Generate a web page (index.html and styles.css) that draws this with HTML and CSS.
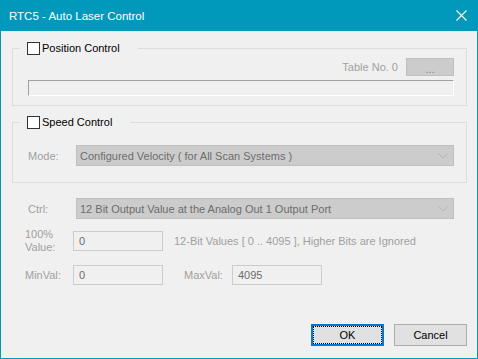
FILE: index.html
```html
<!DOCTYPE html>
<html lang="en">
<head>
  <meta charset="UTF-8">
  <title>RTC5 - Auto Laser Control</title>
  <link rel="stylesheet" href="styles.css">
</head>
<body>

  <div class="window">
    <div class="titlebar">
      <span class="title">RTC5 - Auto Laser Control</span>
      <svg class="close" width="11" height="11" viewBox="0 0 11 11">
        <path d="M0.5 0.5 L10.5 10.5 M10.5 0.5 L0.5 10.5" stroke="#fff" stroke-width="1.1" fill="none"/>
      </svg>
    </div>

    <div class="content">
      <fieldset class="group group-position">
        <legend class="group-title"><span class="check"></span>Position Control</legend>
        <div class="table-row">
          <span class="muted">Table No. 0</span>
          <span class="btn-dots">...</span>
        </div>
        <div class="progress"></div>
      </fieldset>

      <fieldset class="group group-speed">
        <legend class="group-title"><span class="check"></span>Speed Control</legend>
        <div class="combo-row">
          <span class="lbl muted">Mode:</span>
          <div class="combo">
            <span>Configured Velocity ( for All Scan Systems )</span>
            <svg class="chevron" width="10" height="6" viewBox="0 0 10 6"><polyline points="0.5,0.5 5,5 9.5,0.5" fill="none" stroke="#b4b4b4" stroke-width="1"/></svg>
          </div>
        </div>
      </fieldset>

      <div class="combo-row ctrl-row">
        <span class="lbl muted">Ctrl:</span>
        <div class="combo">
          <span>12 Bit Output Value at the Analog Out 1 Output Port</span>
          <svg class="chevron" width="10" height="6" viewBox="0 0 10 6"><polyline points="0.5,0.5 5,5 9.5,0.5" fill="none" stroke="#b4b4b4" stroke-width="1"/></svg>
        </div>
      </div>

      <div class="value-row value-first">
        <span class="lbl muted two-line">100%<br>Value:</span>
        <div class="textbox">0</div>
        <span class="muted hint">12-Bit Values [ 0 .. 4095 ], Higher Bits are Ignored</span>
      </div>

      <div class="value-row value-second">
        <span class="lbl muted">MinVal:</span>
        <div class="textbox">0</div>
        <span class="lbl muted max-lbl">MaxVal:</span>
        <div class="textbox">4095</div>
      </div>

      <div class="actions">
        <button class="btn btn-ok">OK</button>
        <button class="btn">Cancel</button>
      </div>
    </div>
  </div>

</body>
</html>
```

FILE: styles.css
```css
* { box-sizing: border-box; }

body {
  margin: 0;
  font-family: "Liberation Sans", Arial, sans-serif;
  font-size: 11px;
  background: #f0f0f0;
}

.window {
  width: 478px;
  height: 359px;
  border: 1px solid #0099bc;
  border-top: none;
  background: #f0f0f0;
  display: flex;
  flex-direction: column;
}

.titlebar {
  height: 31px;
  margin: 0 -1px;
  background: #0099bc;
  display: flex;
  align-items: center;
  padding: 0 11px 0 9px;
}

.title {
  color: #fff;
  font-size: 11.5px;
  flex: 1;
}

.close {
  display: block;
  margin-top: -1px;
}

.content {
  padding: 9px 10px 0 11px;
  display: flex;
  flex-direction: column;
}

/* group boxes */
.group {
  margin: 0;
  border: 1px solid #dcdcdc;
  padding: 0 12px 0 15px;
  min-width: 0;
}

.group-title {
  display: flex;
  align-items: center;
  height: 16px;
  margin-left: -8px;
  padding: 0 18px 0 7px;
  color: #000;
}

.check {
  width: 13px;
  height: 13px;
  border: 1px solid #333;
  background: #fff;
  margin-right: 2px;
}

.group-position {
  padding-top: 2px;
  padding-bottom: 9px;
}

.group-speed {
  margin-top: 8px;
  padding-top: 15px;
  padding-bottom: 16px;
}

.muted { color: #a0a0a0; }

.table-row {
  display: flex;
  justify-content: flex-end;
  align-items: center;
  gap: 8px;
}

.btn-dots {
  width: 48px;
  height: 18px;
  background: #cccccc;
  border: 1px solid #bfbfbf;
  color: #838383;
  text-align: center;
  line-height: 20px;
}

.progress {
  margin-top: 4px;
  height: 16px;
  border: 1px solid #fff;
  border-top-color: #a0a0a0;
  border-left-color: #a0a0a0;
}

/* rows */
.combo-row {
  display: flex;
  align-items: center;
}

.lbl {
  width: 48px;
  flex: none;
}

.combo {
  flex: 1;
  height: 21px;
  background: #cccccc;
  border: 1px solid #bfbfbf;
  color: #6d6d6d;
  display: flex;
  align-items: center;
  padding: 0 5px 0 3px;
}

.combo span { flex: 1; }

.chevron { display: block; }

.ctrl-row {
  margin: 15px 13px 0 16px;
}

.value-row {
  display: flex;
  align-items: center;
  padding-left: 13px;
}

.value-first { margin-top: 9px; }
.value-second { margin-top: 11px; }

.two-line { line-height: 13px; }

.textbox {
  width: 90px;
  height: 20px;
  border: 1px solid #cccccc;
  color: #6d6d6d;
  padding-left: 5px;
  line-height: 18px;
}

.hint { margin-left: 11px; }

.max-lbl { margin-left: 21px; }

/* dialog buttons */
.actions {
  margin-top: 39px;
  display: flex;
  justify-content: flex-end;
  gap: 10px;
}

.btn {
  width: 73px;
  height: 22px;
  padding: 0;
  font-family: inherit;
  font-size: 11px;
  color: #000;
  background: #e1e1e1;
  border: 1px solid #adadad;
  border-radius: 0;
}

.btn-ok {
  border: 2px solid #0078d7;
  outline: 1px dotted #000;
  outline-offset: -3px;
}
```
